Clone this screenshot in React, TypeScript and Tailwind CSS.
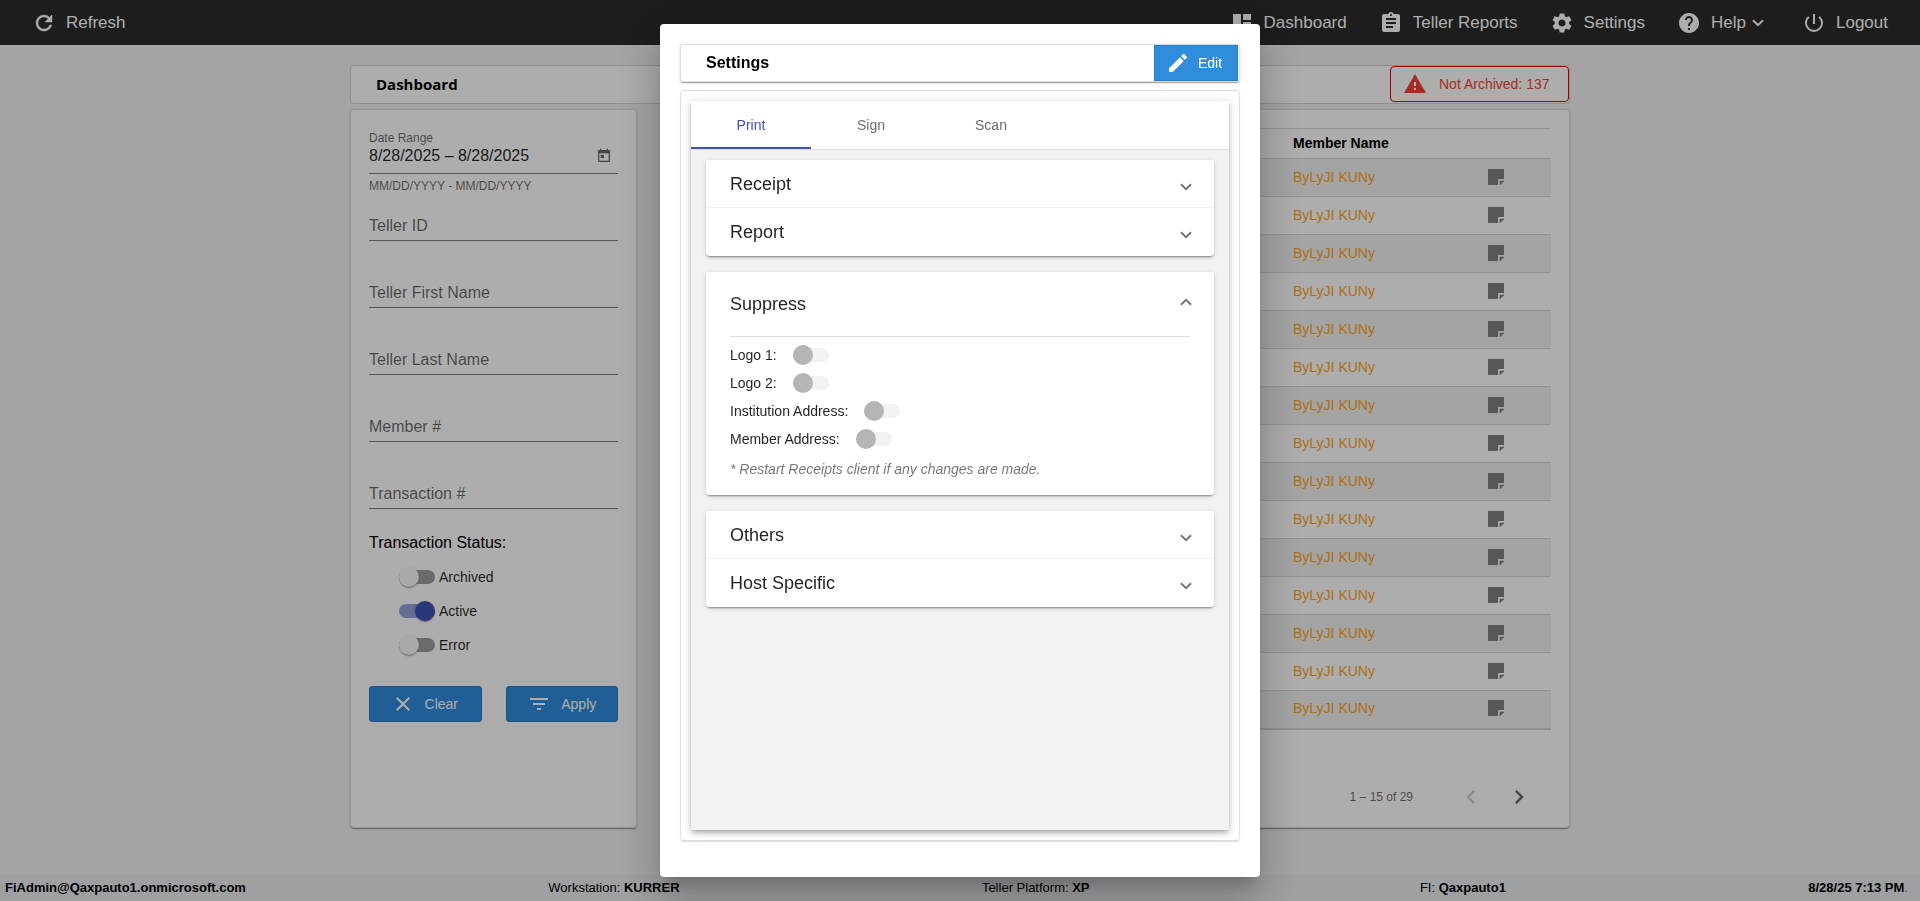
import { useState } from "react";
import type { ReactNode } from "react";
import {
  MdDashboard,
  MdAssignment,
  MdSettings,
  MdHelp,
  MdPowerSettingsNew,
  MdFilterList,
  MdEdit,
  MdToday,
  MdChevronLeft,
  MdChevronRight,
} from "react-icons/md";

const cardShadow = "shadow-[0_2px_1px_-1px_rgba(0,0,0,0.2),0_1px_1px_0_rgba(0,0,0,0.14),0_1px_3px_0_rgba(0,0,0,0.12)]";
const panelShadow = "shadow-[0_3px_1px_-2px_rgba(0,0,0,0.2),0_2px_2px_0_rgba(0,0,0,0.14),0_1px_5px_0_rgba(0,0,0,0.12)]";

function Chevron({ className = "" }: { className?: string }) {
  return (
    <svg viewBox="0 0 12 8" className={`h-2 w-3 ${className}`} fill="none" stroke="currentColor" strokeWidth="2">
      <path d="M1 1.2 6 6.2 11 1.2" />
    </svg>
  );
}

function RefreshIcon() {
  return (
    <svg viewBox="0 0 24 24" className="size-6" fill="currentColor" stroke="currentColor" strokeWidth="0.5">
      <path d="M17.65 6.35A7.96 7.96 0 0 0 12 4c-4.42 0-7.99 3.58-7.99 8s3.57 8 7.99 8c3.73 0 6.84-2.55 7.73-6h-2.08A5.99 5.99 0 0 1 12 18c-3.31 0-6-2.69-6-6s2.69-6 6-6c1.66 0 3.14.69 4.22 1.78L13 11h7V4l-2.35 2.35z" />
    </svg>
  );
}

function CloseIcon() {
  return (
    <svg viewBox="0 0 20 20" className="size-5" fill="none" stroke="currentColor" strokeWidth="2">
      <path d="M3.7 3.7 16.3 16.3M16.3 3.7 3.7 16.3" />
    </svg>
  );
}

function WarningIcon() {
  return (
    <svg viewBox="0 0 24 24" className="size-6" fill="currentColor">
      <path d="M1 21h22L12 2 1 21zm12-3h-2v-2h2v2zm0-4h-2v-4h2v4z" />
    </svg>
  );
}

function NoteIcon() {
  return (
    <svg viewBox="0 0 16 16" className="size-4 text-[#808080]" fill="currentColor">
      <path d="M.8 0h14.4c.5 0 .8.3.8.8V10h-5c-.6 0-1 .4-1 1v5H.8c-.5 0-.8-.3-.8-.8V.8C0 .3.3 0 .8 0Z" />
      <path d="M11.7 11.7H16v.6L12.3 16h-.6Z" />
    </svg>
  );
}

function NavItem({ icon, label, more }: { icon: ReactNode; label: string; more?: boolean }) {
  return (
    <a href="#" className="flex items-center gap-2.5">
      {icon}
      <span>{label}</span>
      {more && <Chevron className="mr-1.5 -ml-1" />}
    </a>
  );
}

function Field({ id, label }: { id: string; label: string }) {
  const [value, setValue] = useState("");
  return (
    <div className="grid h-[41px] content-end border-b border-black/50 pb-0.5">
      <label htmlFor={id} className={`col-start-1 row-start-1 text-base text-black/60 ${value ? "invisible" : ""}`}>
        {label}
      </label>
      <input
        id={id}
        value={value}
        onChange={(e) => setValue(e.target.value)}
        className="col-start-1 row-start-1 h-6 w-full bg-transparent text-base outline-none"
      />
    </div>
  );
}

function Toggle({ label, on }: { label: string; on?: boolean }) {
  const [checked, setChecked] = useState(!!on);
  return (
    <label className="flex h-[34px] items-center gap-1 text-sm text-black/87">
      <input type="checkbox" checked={checked} onChange={() => setChecked(!checked)} className="peer sr-only" />
      <span className="relative h-3.5 w-9 rounded-full bg-black/38 peer-checked:bg-[#3f51b5]/54">
        <span
          className={`absolute -top-[3px] size-5 rounded-full shadow-[0_2px_1px_-1px_rgba(0,0,0,0.2),0_1px_1px_0_rgba(0,0,0,0.14),0_1px_3px_0_rgba(0,0,0,0.12)] ${
            checked ? "right-0 bg-[#3f51b5]" : "left-0 bg-[#fafafa]"
          }`}
        />
      </span>
      {label}
    </label>
  );
}

function SuppressRow({ label }: { label: string }) {
  return (
    <label className="flex h-7 items-center gap-4">
      {label}
      <input type="checkbox" disabled className="sr-only" />
      <span className="relative h-3.5 w-9 rounded-full bg-[#f2f2f2]">
        <span className="absolute -top-[3px] left-0 size-5 rounded-full bg-[#b5b5b5]" />
      </span>
    </label>
  );
}

function PanelHeader({ title }: { title: string }) {
  return (
    <button className="flex h-12 w-full items-center justify-between border-black/5 pr-[22px] pl-6 text-lg text-black/87 not-last:border-b">
      {title}
      <Chevron className="mt-1.5 text-black/54" />
    </button>
  );
}

function SettingsDialog() {
  return (
    <div
      role="dialog"
      aria-label="Settings"
      className="flex h-[853px] w-[600px] flex-col gap-2 rounded bg-white px-5 pt-5 pb-9 shadow-[0_11px_15px_-7px_rgba(0,0,0,0.2),0_24px_38px_3px_rgba(0,0,0,0.14),0_9px_46px_8px_rgba(0,0,0,0.12)]"
    >
      <div className={`flex h-[38px] items-stretch justify-between rounded-[3px] border border-[#dfdfdf] pr-px pl-[25px] ${cardShadow}`}>
        <h2 className="text-base leading-9 font-bold">Settings</h2>
        <button className="flex w-[84px] items-center justify-center gap-2 border border-[#2a7cc4] bg-[#2f8ddc] pr-1 text-sm text-white">
          <MdEdit className="size-6" />
          Edit
        </button>
      </div>

      <div className="flex-1 rounded border border-[#dfdfdf] p-2.5 shadow-[0_1px_1px_0_rgba(0,0,0,0.14)]">
        <div className="h-full bg-[#f2f2f2] shadow-[0_2px_4px_-1px_rgba(0,0,0,0.2),0_4px_5px_0_rgba(0,0,0,0.14),0_1px_10px_0_rgba(0,0,0,0.12)]">
          <div role="tablist" className="flex border-b border-[#dfdfdf] bg-white text-sm text-black/60">
            <button role="tab" aria-selected="true" className="h-12 w-[120px] border-b-2 border-[#3f51b5] pt-0.5 text-[#3f51b5]">
              Print
            </button>
            <button role="tab" className="h-12 w-[120px]">Sign</button>
            <button role="tab" className="h-12 w-[120px]">Scan</button>
          </div>

          <div className="flex flex-col gap-4 px-[15px] py-2.5">
            <div className={`rounded bg-white ${panelShadow}`}>
              <PanelHeader title="Receipt" />
              <PanelHeader title="Report" />
            </div>

            <div className={`h-[223px] rounded bg-white px-6 text-black/87 ${panelShadow}`}>
              <button className="flex h-16 w-full items-center justify-between text-lg">
                Suppress
                <Chevron className="-mr-0.5 mb-1 rotate-180 text-black/54" />
              </button>
              <div className="border-t border-[#dfdfdf] pt-1 text-sm">
                <SuppressRow label="Logo 1:" />
                <SuppressRow label="Logo 2:" />
                <SuppressRow label="Institution Address:" />
                <SuppressRow label="Member Address:" />
                <p className="pt-1.5 text-black/54 italic">* Restart Receipts client if any changes are made.</p>
              </div>
            </div>

            <div className={`rounded bg-white ${panelShadow}`}>
              <PanelHeader title="Others" />
              <PanelHeader title="Host Specific" />
            </div>
          </div>
        </div>
      </div>
    </div>
  );
}

export default function App() {
  return (
    <div className="flex min-h-screen flex-col bg-[#f2f2f2] font-['Liberation_Sans',Arial,sans-serif] text-black">
      <header className="flex h-[45px] items-center justify-between bg-[#2b2b2b] px-8 text-[17px] text-white">
        <NavItem icon={<RefreshIcon />} label="Refresh" />
        <nav className="flex items-center gap-8">
          <NavItem icon={<MdDashboard className="size-6" />} label="Dashboard" />
          <NavItem icon={<MdAssignment className="size-6" />} label="Teller Reports" />
          <NavItem icon={<MdSettings className="size-6" />} label="Settings" />
          <NavItem icon={<MdHelp className="size-6" />} label="Help" more />
          <NavItem icon={<MdPowerSettingsNew className="size-6" />} label="Logout" />
        </nav>
      </header>

      <main className="mx-auto flex w-full max-w-[1220px] flex-1 flex-col gap-[5px] pt-5 pb-[47px]">
        <div className="flex h-[39px] items-start justify-between rounded border border-[#d2d2d2] bg-white pl-[25px]">
          <h1 className="font-['Open_Sans',sans-serif] text-[15px] leading-9 font-bold">Dashboard</h1>
          <button className="flex h-9 w-[179px] items-center gap-3 rounded border border-[#f00000] pl-3 text-sm text-[#f44336]">
            <WarningIcon />
            Not Archived: 137
          </button>
        </div>

        <div className="flex flex-1 gap-7">
          <form className={`w-[287px] rounded border border-[#e0e0e0] bg-white px-[18px] pt-5 ${cardShadow}`}>
            <label htmlFor="range" className="block text-xs leading-4 text-black/60">
              Date Range
            </label>
            <div className="flex h-7 items-start border-b border-black/50">
              <input
                id="range"
                defaultValue="8/28/2025 – 8/28/2025"
                className="h-5 min-w-0 flex-1 bg-transparent text-base leading-5 text-black/87 outline-none"
              />
              <button type="button" aria-label="Open calendar" className="mt-0.5 mr-1.5 text-black/60">
                <MdToday className="size-4" />
              </button>
            </div>
            <p className="mb-1.5 pt-1 text-xs leading-4 text-black/60">MM/DD/YYYY - MM/DD/YYYY</p>
            <div className="flex flex-col gap-[26px]">
              <Field id="teller-id" label="Teller ID" />
              <Field id="first" label="Teller First Name" />
              <Field id="last" label="Teller Last Name" />
              <Field id="member" label="Member #" />
              <Field id="transaction" label="Transaction #" />
            </div>
            <fieldset className="pt-[22px]">
              <legend className="contents text-base">Transaction Status:</legend>
              <div className="pt-[5px] pl-[30px]">
                <Toggle label="Archived" />
                <Toggle label="Active" on />
                <Toggle label="Error" />
              </div>
            </fieldset>
            <div className="flex gap-6 pt-6">
              <button type="button" className="flex h-9 flex-1 items-center justify-center gap-3 rounded-[3px] border border-[#2a7cc4] bg-[#2f8ddc] text-sm text-white">
                <CloseIcon />
                Clear
              </button>
              <button type="button" className="flex h-9 flex-1 items-center justify-center gap-2.5 rounded-[3px] border border-[#2a7cc4] bg-[#2f8ddc] text-sm text-white">
                <MdFilterList className="size-6" />
                Apply
              </button>
            </div>
          </form>

          <section className={`flex-1 rounded border border-[#e0e0e0] bg-white px-[18px] pt-[18px] ${cardShadow}`}>
            <table className="w-full border-collapse border-y border-b-2 border-[#d5d8dd] text-left text-sm">
              <thead>
                <tr className="h-[30px]">
                  <th />
                  <th className="w-[195px] pb-0.5">Member Name</th>
                  <th className="w-[63px]" />
                </tr>
              </thead>
              <tbody>
                {Array.from({ length: 15 }, (_, i) => (
                  <tr key={i} className="h-[38px] border-t border-[#d5d8dd] odd:bg-[#f2f2f2]">
                    <td />
                    <td className="pb-0.5">
                      <a href="#" className="text-[#ffa31a]">ByLyJI KUNy</a>
                    </td>
                    <td className="pb-0.5">
                      <NoteIcon />
                    </td>
                  </tr>
                ))}
              </tbody>
            </table>
            <div className="flex items-center justify-end pt-[53px] text-xs text-black/60">
              <span className="mr-11">1 – 15 of 29</span>
              <button disabled aria-label="Previous page" className="mr-5 text-black/20">
                <MdChevronLeft className="size-7" />
              </button>
              <button aria-label="Next page" className="mr-[18px]">
                <MdChevronRight className="size-7" />
              </button>
            </div>
          </section>
        </div>
      </main>

      <footer className="flex h-[26px] items-center justify-between bg-[#e9ecef] pr-3 pl-[5px] text-[13px]">
        <b>FiAdmin@Qaxpauto1.onmicrosoft.com</b>
        <span>Workstation: <b>KURRER</b></span>
        <span>Teller Platform: <b>XP</b></span>
        <span className="pl-7">FI: <b>Qaxpauto1</b></span>
        <span className="text-black/40"><b className="text-black">8/28/25 7:13 PM</b>.</span>
      </footer>

      <div className="fixed inset-0 flex items-center justify-center bg-black/32">
        <SettingsDialog />
      </div>
    </div>
  );
}
